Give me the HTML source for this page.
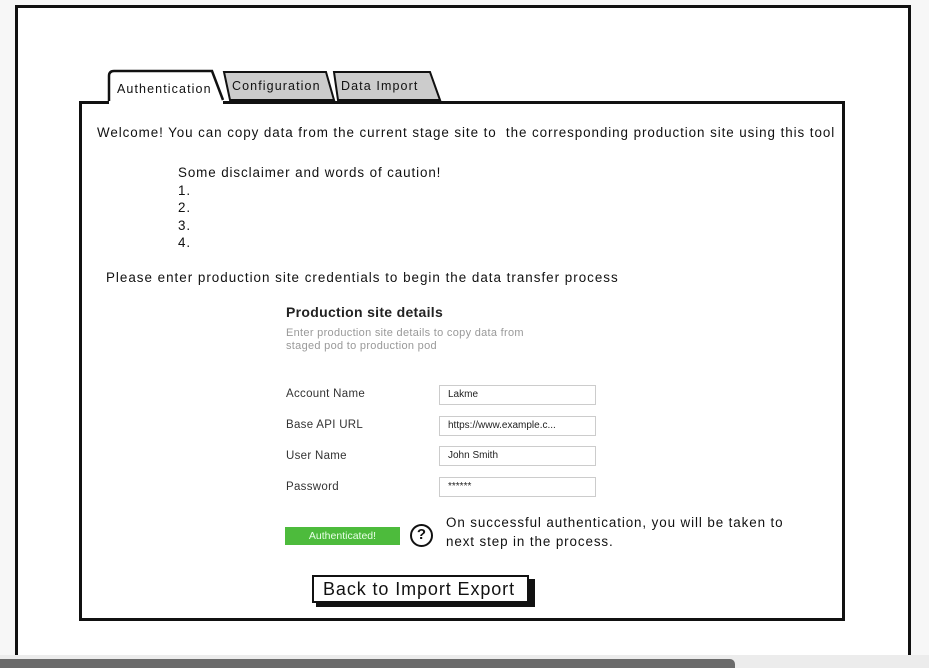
<!DOCTYPE html>
<html><head><meta charset="utf-8"><style>
*{margin:0;padding:0;box-sizing:border-box}
body{width:929px;height:668px;position:relative;overflow:hidden;background:#f7f7f7;font-family:"Liberation Sans",sans-serif;color:#111}
.a{position:absolute;white-space:nowrap}
.frame{position:absolute;left:15px;top:5px;width:896px;height:652px;background:#fff;border:3px solid #111;border-bottom:none}
.panel{position:absolute;left:79px;top:101px;width:766px;height:520px;border:3px solid #111;background:#fff}
.t{font-size:13.4px;letter-spacing:0.9px}
.lbl{font-size:11.5px;color:#333}
.inp{position:absolute;left:439px;width:157px;height:20px;border:1px solid #ccc;font-size:10px;padding:3px 0 0 8px;color:#222;background:#fff}
</style></head><body>
<div class="frame"></div>
<svg class="a" style="left:0;top:0" width="929" height="668">
<path d="M109 103 L109 76 Q109 71 114 71 L212 71 L223 100" fill="#fff" stroke="#111" stroke-width="2.5"/>
<path d="M224 72 L326 72 L334 100 L230 100 Z" fill="#ccc" stroke="#111" stroke-width="2"/>
<path d="M334 72 L430 72 L440 100 L338 100 Z" fill="#ccc" stroke="#111" stroke-width="2"/>
</svg>
<div class="panel"></div>
<svg class="a" style="left:0;top:0" width="929" height="668"><path d="M109 103 L223 103" stroke="#fff" stroke-width="4"/></svg>
<div class="a" style="left:117px;top:82px;font-size:12.5px;letter-spacing:1.1px">Authentication</div>
<div class="a" style="left:232px;top:79px;font-size:12.5px;letter-spacing:1.1px">Configuration</div>
<div class="a" style="left:341px;top:79px;font-size:12.5px;letter-spacing:1.1px">Data Import</div>
<div class="a t" style="left:97px;top:125px;letter-spacing:0.93px">Welcome! You can copy data from the current stage site to&nbsp; the corresponding production site using this tool</div>
<div class="a t" style="left:178px;top:164px;line-height:17.5px">Some disclaimer and words of caution!<br>1.<br>2.<br>3.<br>4.</div>
<div class="a t" style="left:106px;top:270px;letter-spacing:1px">Please enter production site credentials to begin the data transfer process</div>
<div class="a" style="left:286px;top:304px;font-size:14px;font-weight:bold;color:#222;letter-spacing:0.3px">Production site details</div>
<div class="a" style="left:286px;top:327px;font-size:11px;color:#999;line-height:12.5px;letter-spacing:0.3px">Enter production site details to copy data from<br>staged pod to production pod</div>
<div class="a lbl" style="left:286px;top:388px;letter-spacing:0.3px">Account Name</div>
<div class="a lbl" style="left:286px;top:419px;letter-spacing:0.3px">Base API URL</div>
<div class="a lbl" style="left:286px;top:450px;letter-spacing:0.3px">User Name</div>
<div class="a lbl" style="left:286px;top:481px;letter-spacing:0.3px">Password</div>
<div class="inp" style="top:385px">Lakme</div>
<div class="inp" style="top:416px">https://www.example.c...</div>
<div class="inp" style="top:446px">John Smith</div>
<div class="inp" style="top:477px">******</div>
<div class="a" style="left:285px;top:527px;width:115px;height:18px;background:#4dbb3c;color:#e8ffe6;font-size:10.5px;text-align:center;line-height:18px">Authenticated!</div>
<div class="a" style="left:410px;top:524px;width:23px;height:23px;border:2.5px solid #111;border-radius:50%;font-size:15px;font-weight:bold;text-align:center;line-height:18px">?</div>
<div class="a t" style="left:446px;top:513px;line-height:19px">On successful authentication, you will be taken to<br>next step in the process.</div>
<div class="a" style="left:316px;top:579px;width:219px;height:28px;background:#111"></div>
<div class="a" style="left:312px;top:575px;width:217px;height:28px;border:2px solid #111;background:#fff;font-size:18px;padding-left:9px;line-height:24px;letter-spacing:0.9px">Back to Import Export</div>
<div class="a" style="left:0;top:655px;width:929px;height:13px;background:#ececec"></div>
<div class="a" style="left:0;top:659px;width:735px;height:9px;background:#6b6b6b;border-radius:0 5px 0 0"></div>
</body></html>
